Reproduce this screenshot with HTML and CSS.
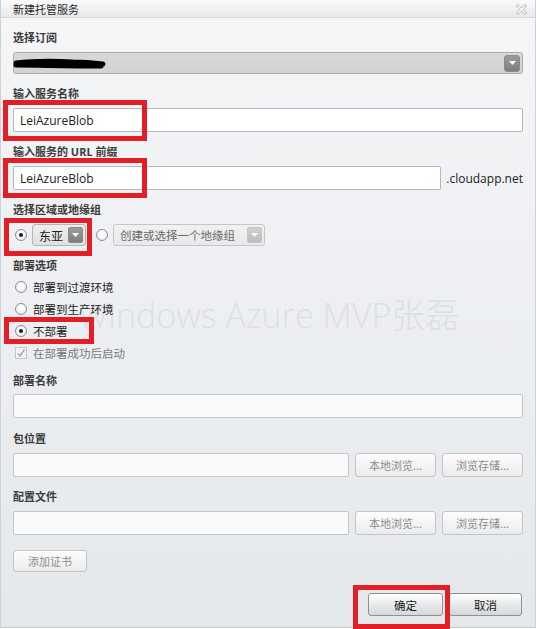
FILE: index.html
```html
<!DOCTYPE html>
<html lang="zh-CN">
<head>
<meta charset="utf-8">
<title>新建托管服务</title>
<link rel="stylesheet" href="styles.css">
</head>
<body>
<div class="dialog">
  <div class="watermark">Windows Azure MVP张磊</div>
  <div class="titlebar">
    <span class="title">新建托管服务</span>
    <svg class="close" width="11" height="11" viewBox="0 0 11 11"><polygon points="0.5,2 2,0.5 5.5,4 9,0.5 10.5,2 7,5.5 10.5,9 9,10.5 5.5,7 2,10.5 0.5,9 4,5.5" fill="#fff" stroke="#a0a0a0" stroke-width="0.8"/></svg>
  </div>
  <div class="content">
    <div class="label l-first">选择订阅</div>
    <div class="select-wide">
      <svg class="scribble" width="94" height="12" viewBox="0 0 94 12"><path d="M3 5 C20 3 40 3 60 4 C72 4 82 5 90 6 M3 7 C25 7 50 8 88 8 M4 6 L24 6" stroke="#000" stroke-width="5" stroke-linecap="round" fill="none"/></svg>
      <span class="arrow-btn"><svg width="7" height="4" viewBox="0 0 7 4"><polygon points="0,0 7,0 3.5,4" fill="#fff"/></svg></span>
    </div>

    <div class="label l-gap">输入服务名称</div>
    <div class="input filled">LeiAzureBlob</div>

    <div class="label l-gap">输入服务的 URL 前缀</div>
    <div class="row url-row">
      <div class="input filled grow">LeiAzureBlob</div>
      <span class="suffix">.cloudapp.net</span>
    </div>

    <div class="label l-gap">选择区域或地缘组</div>
    <div class="row region-row">
      <span class="radio checked"></span>
      <div class="combo combo-east"><span class="combo-text">东亚</span><span class="arrow-btn small"><svg width="7" height="4" viewBox="0 0 7 4"><polygon points="0,0 7,0 3.5,4" fill="#fff"/></svg></span></div>
      <span class="radio radio-second"></span>
      <div class="combo combo-affinity"><span class="combo-text muted">创建或选择一个地缘组</span><span class="arrow-btn small light"><svg width="7" height="4" viewBox="0 0 7 4"><polygon points="0,0 7,0 3.5,4" fill="#fff"/></svg></span></div>
    </div>

    <div class="label l-gap">部署选项</div>
    <div class="options">
      <div class="opt"><span class="radio"></span><span>部署到过渡环境</span></div>
      <div class="opt"><span class="radio"></span><span>部署到生产环境</span></div>
      <div class="opt"><span class="radio checked"></span><span>不部署</span></div>
      <div class="opt disabled"><span class="checkbox"><svg width="10" height="10" viewBox="0 0 10 10"><path d="M2 5.5 L4 8 L8.5 1.5" stroke="#a8a8a8" stroke-width="1.4" fill="none"/></svg></span><span>在部署成功后启动</span></div>
    </div>

    <div class="label l-deploy">部署名称</div>
    <div class="input empty i-deploy"></div>

    <div class="label l-pkg">包位置</div>
    <div class="row file-row">
      <div class="input empty grow"></div>
      <button class="btn dis">本地浏览...</button>
      <button class="btn dis">浏览存储...</button>
    </div>

    <div class="label l-gap">配置文件</div>
    <div class="row file-row">
      <div class="input empty grow"></div>
      <button class="btn dis">本地浏览...</button>
      <button class="btn dis">浏览存储...</button>
    </div>

    <div class="cert-row"><button class="btn dis cert">添加证书</button></div>

    <div class="footer">
      <button class="btn main ok">确定</button>
      <button class="btn main cancel">取消</button>
    </div>
  </div>

  <div class="mark m1"></div>
  <div class="mark m2"></div>
  <div class="mark m3"></div>
  <div class="mark m4"></div>
  <div class="mark m5"></div>
</div>
</body>
</html>
```

FILE: styles.css
```css
* { box-sizing: border-box; }
html, body { margin: 0; padding: 0; background: #fff; }
body {
  width: 536px;
  height: 629px;
  overflow: hidden;
  font-family: "Noto Sans CJK SC", "Open Sans", sans-serif;
  font-size: 11px;
  color: #333;
}
.dialog {
  position: relative;
  width: 536px;
  height: 628px;
  background: linear-gradient(#f4f6f8, #e5e8eb);
  border-left: 1px solid #cfd2d5;
  border-right: 1px solid #cfd2d5;
  border-bottom: 1px solid #c9ccd0;
}
.titlebar {
  position: relative;
  z-index: 1;
  height: 18px;
  display: flex;
  align-items: center;
  justify-content: space-between;
  padding: 0 8px 0 12px;
  background: linear-gradient(#fafafa, #e6e8eb);
  border-bottom: 1px solid #d9dbde;
}
.title { font-size: 11px; color: #2a2a2a; line-height: 16px; }
.close { display: block; margin-top: 1px; }
.content {
  position: relative;
  z-index: 1;
  display: flex;
  flex-direction: column;
  padding: 0 12px 0 12px;
}
.label {
  height: 16px;
  line-height: 16px;
  font-weight: bold;
  font-size: 11px;
  color: #3c3c3c;
  font-family: "Open Sans", "Noto Sans CJK SC", sans-serif;
}
.l-first { margin-top: 12px; }
.l-gap { margin-top: 12px; }
.l-deploy { margin-top: 9px; }
.l-pkg { margin-top: 13px; }

.select-wide {
  margin-top: 6px;
  height: 22px;
  border: 1px solid #a9abad;
  border-radius: 3px;
  background: linear-gradient(#d9d9d9, #d2d2d2);
  display: flex;
  align-items: center;
  justify-content: space-between;
  padding: 0 2px 0 0;
}
.scribble { display: block; margin-left: -1px; margin-top: 1px; }
.arrow-btn {
  width: 16px;
  height: 17px;
  border-radius: 3px;
  background: linear-gradient(#9c9c9c, #7e7e7e);
  border: 1px solid #8a8a8a;
  display: flex;
  align-items: center;
  justify-content: center;
}
.arrow-btn svg { display: block; }
.arrow-btn.small { width: 15px; height: 16px; border-radius: 2px; }
.arrow-btn.light { background: linear-gradient(#cfcfcf, #bdbdbd); border-color: #c4c4c4; }

.input {
  margin-top: 6px;
  height: 24px;
  border: 1px solid #b4b7bb;
  border-radius: 2px;
  background: #fff;
  display: flex;
  align-items: center;
  padding-left: 6px;
  font-family: "Open Sans", sans-serif;
  font-size: 12px;
  color: #222;
}
.input.empty { background: #fafafa; border-color: #c2c5c9; }
.row { display: flex; align-items: center; margin-top: 6px; }
.row .input { margin-top: 0; }
.grow { flex: 1; }
.url-row { gap: 5px; }
.suffix { font-family: "Open Sans", sans-serif; font-size: 12px; color: #222; padding-right: 0; }

.region-row { height: 22px; }
.radio {
  width: 12px;
  height: 12px;
  border-radius: 50%;
  border: 1px solid #8d9092;
  background: radial-gradient(circle at 50% 40%, #ffffff 20%, #dfe1e3 100%);
  position: relative;
  flex: none;
  margin-left: 2px;
}
.radio.checked::after {
  content: "";
  position: absolute;
  left: 3px; top: 3px;
  width: 4px; height: 4px;
  border-radius: 50%;
  background: #1e1e1e;
}
.combo {
  height: 22px;
  border: 1px solid #b3b5b8;
  border-radius: 3px;
  background: linear-gradient(#eeeeee, #e0e0e0);
  display: flex;
  align-items: center;
  justify-content: space-between;
  padding: 0 2px 0 6px;
  font-size: 12px;
}
.combo-east { width: 54px; margin-left: 5px; }
.combo-affinity { width: 152px; margin-left: 5px; background: linear-gradient(#f1f1f1, #e8e8e8); border-color: #c3c5c8; }
.radio-second { margin-left: 10px; }
.combo-text { color: #222; }
.combo-text.muted { color: #6a6a6a; font-size: 11.5px; }

.options { display: flex; flex-direction: column; margin-top: 2px; }
.opt {
  height: 22px;
  display: flex;
  align-items: center;
  gap: 6px;
  font-size: 11.5px;
  color: #222;
}
.opt.disabled { color: #7a7a7a; }
.checkbox {
  width: 12px; height: 12px;
  margin-left: 2px;
  border: 1px solid #c4c6c8;
  background: #f2f2f2;
  display: flex; align-items: center; justify-content: center;
}
.checkbox svg { display: block; }

.i-deploy { margin-top: 5px; }
.file-row { gap: 6px; }
.btn {
  height: 24px;
  width: 81px;
  border: 1px solid #c3c5c8;
  border-radius: 3px;
  background: linear-gradient(#fdfdfd, #ebebeb);
  font-family: "Noto Sans CJK SC", sans-serif;
  font-size: 11px;
  color: #8d8d8d;
  padding: 0;
  cursor: default;
}
.cert-row { margin-top: 15px; display: flex; }
.btn.cert { width: 74px; height: 22px; }
.footer { margin-top: 21px; display: flex; justify-content: flex-end; gap: 6px; padding-right: 1px; }
.btn.main {
  height: 23px;
  border-color: #8f9193;
  background: linear-gradient(#ffffff, #e6e7e8 55%, #d6d8da);
  color: #1a1a1a;
  font-size: 11.5px;
}
.btn.ok { width: 75px; }
.btn.cancel { width: 73px; }

.watermark {
  position: absolute;
  z-index: 0;
  left: 77px;
  top: 298px;
  font-family: "Open Sans", "Noto Sans CJK SC", sans-serif;
  font-weight: 300;
  font-size: 34px;
  line-height: 34px;
  color: #dde0e3;
  white-space: nowrap;
  pointer-events: none;
}
.mark {
  position: absolute;
  z-index: 2;
  border: 5px solid #e21e27;
  pointer-events: none;
}
.m1 { left: 2px; top: 100px; width: 144px; height: 41px; }
.m2 { left: 2px; top: 158px; width: 144px; height: 40px; }
.m3 { left: 3px; top: 218px; width: 88px; height: 38px; }
.m4 { left: 3px; top: 317px; width: 90px; height: 27px; }
.m5 { left: 352px; top: 585px; width: 97px; height: 44px; }
```
